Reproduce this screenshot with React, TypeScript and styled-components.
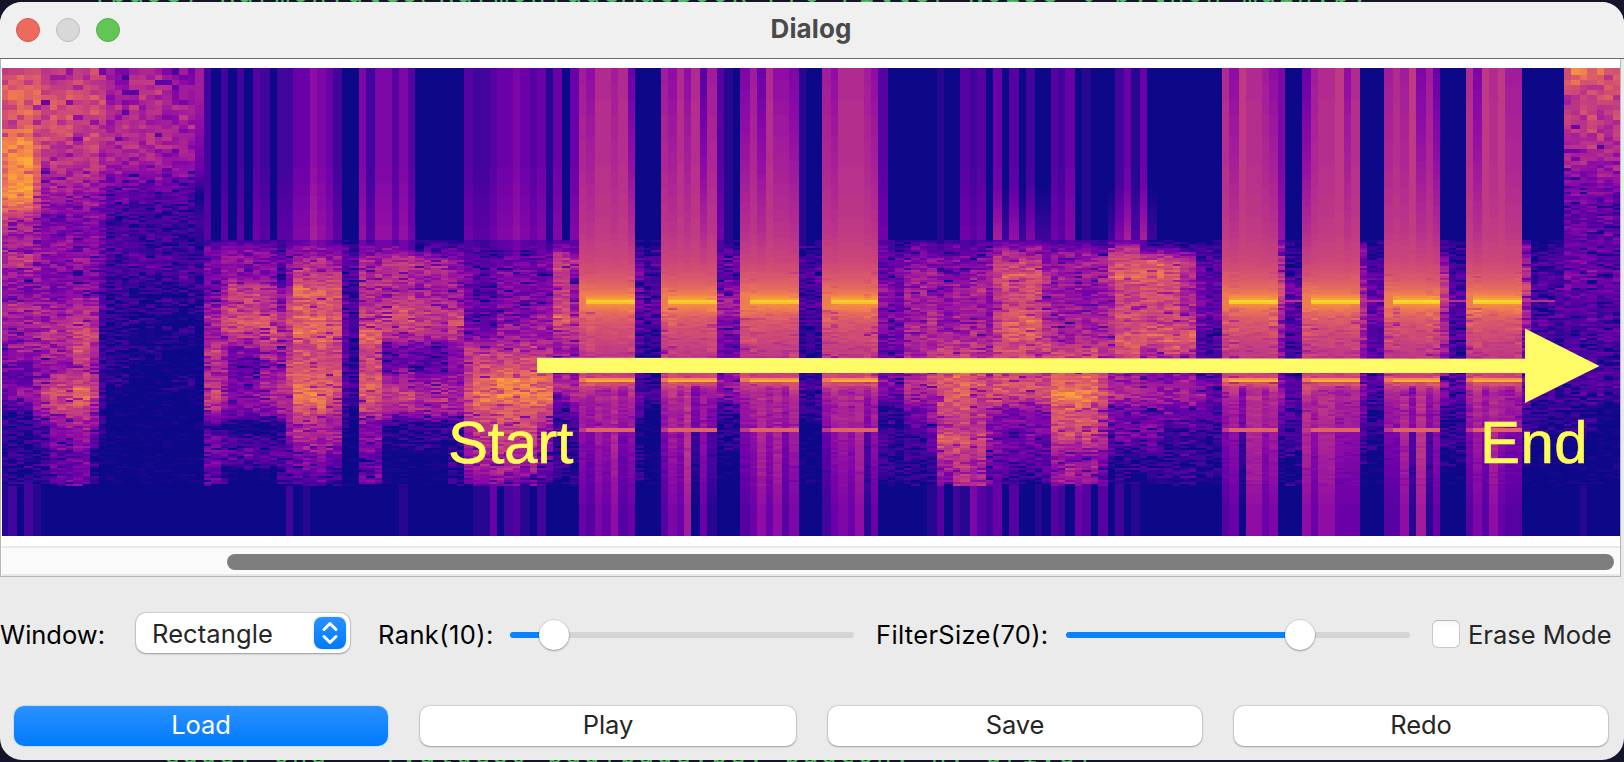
import React from "react";
import styled, { createGlobalStyle } from "styled-components";

const GlobalStyle = createGlobalStyle`
  * { box-sizing: border-box; }
  html, body { margin: 0; padding: 0; overflow: hidden; }
  body { background: #15152a; }
`;

/* ---------- spectrogram data ---------- */

// Each column: left edge, level at the top, level at the bottom (a = 0, each letter adds 0.05).
const COLUMNS =
  "2kb 8kc 17ka 24kc 33kb 41ia 50ia 57ia 66ia 73ia 83ia 90ia 99ia 106ia 115ia 122ia 129ia 139ia 146ia 155ia 162ia 172ia 179ia 188ia 195ha " +
  "204ca 211aa 221ca 228aa 237ca 244aa 253da 260ca 270aa 277ca 286cc 293ea 303eb 310ga 317fa 326ea 333ca 342aa 349aa 359fa 366ca 375fa 382fa 392da 399fb 408da " +
  "415aa 424aa 431aa 441aa 448aa 457aa 464da 473cb 480cb 490de 497ea 504ec 513fd 520eb 530da 537ec 546ba 553ea 562aa 570ea " +
  "579he 586gd 595if 602ie 611hg 618id 628ee 635aa 644aa 651aa 661hd 668gf 677ie 684gh 691ia 700de 707hb 717da 724ba 733aa " +
  "740fd 750he 757eg 766ie 773gg 782gd 789ff 799ba 806aa 815aa 822hc 831ge 838if 848ie 855ig 864hb 871ge 878da " +
  "888aa 895aa 904aa 911aa 920aa 927ab 937bd 944aa 953ac 960db 970cf 977dd 986ac 993ee 1002aa 1009dd 1019aa 1026ca 1035ab 1042aa " +
  "1051dd 1058cc 1065ea 1075ae 1082bd 1091aa 1098ad 1108aa 1115cc 1124ea 1131bb 1140ea 1147aa 1157aa 1164aa 1173aa 1180aa 1189aa 1196aa 1206aa 1213aa " +
  "1222id 1229ge 1239ja 1246ig 1253ig 1262he 1269gf 1278fa 1285aa 1295aa 1302eg 1311he 1318ig 1328ig 1335je 1344ge 1351ie 1360aa 1367aa 1377aa " +
  "1384hd 1393id 1400hg 1409jb 1416fh 1426hb 1433ee 1440aa 1449aa 1456aa 1466id 1473ff 1482jd 1489ig 1498je 1505hd 1515hd 1522aa 1531aa 1538aa 1548aa 1555aa " +
  "1564na 1571na 1580nb 1587na 1597ma 1604ma 1613ma";

// Level profiles of the voiced region, sampled every 15px from y = 245.
// Regions with an upper profile are noisy over the full height.
const REGIONS: [number, string, string?][] = [
  [2, "higfihhfeeecccbbb", "kmlonoj"],
  [8, "hkgfihghedhbbbbbb", "knmpppi"],
  [33, "gigfiiihfhhgccbbb", "kmklmlh"],
  [41, "ggffhhihgikhddccc", "ijkjihf"],
  [50, "ggffhijigjljgfede", "ikljjhf"],
  [73, "ghfgijkkilmjhgefe", "jkkjihf"],
  [90, "ggfghhjigikhfebbc", "jkkjihf"],
  [99, "eeddecbccbcbbaaaa", "ijjihfe"],
  [106, "dccccbbbbbaaaaaaa", "ghiigec"],
  [129, "cdcbbbabaaaaaaaaa", "hiiigdc"],
  [162, "ccdbbabaabaaaaaaa", "ghhhgdc"],
  [195, "bccbbaaaaaaaaaaaa", "hhgfeac"],
  [204, "effegigjiikhbefde"],
  [221, "fgghikihhhifbdeae"],
  [228, "fggkjljfdfgfaceaa"],
  [260, "ffgjilkighifbceaa"],
  [277, "debfhiiggiihbcebc"],
  [286, "egfhkkiiklihhfdeb"],
  [293, "fijmlmmklmnlihged"],
  [326, "fhjllllkklljhiedb"],
  [342, "dddceededddbbaaaa"],
  [349, "bddbcccbbccaaaaaa"],
  [359, "ehiiikmkklljfgeef"],
  [382, "ejiikkieehkhbbaaa"],
  [415, "cihhjjiddgihbbaaa"],
  [448, "cfhhikiffgigbbbbb"],
  [464, "cdgfeegkjkljhhgfe"],
  [473, "cdecedfjkmnliihhe"],
  [497, "cefffghjloolkjihf"],
  [537, "dfefghgjkmnkhgfec"],
  [553, "fjjjkmihfigdcbcbb"],
  [570, "digghjigfgiecbbab"],
  [635, "befeeddcdddcbabba"],
  [644, "bdcdddbbbbcaaaaaa"],
  [717, "bfdgiffefggcbbaaa"],
  [799, "bcdcdccbaccbaaaaa"],
  [878, "deegffeeegebccbbb"],
  [895, "cefefffedgdbacaba"],
  [904, "efhhhhihhiiedbcbb"],
  [927, "eghghihjikhgfecbb"],
  [937, "dfgfgghklllkimigf"],
  [953, "dfghhhhjlmmkjljij"],
  [970, "dfhihhijjlkjilihi"],
  [986, "efigfghiiikhfhfee"],
  [993, "fjkjijkkkklhfffee"],
  [1002, "gjlkkmlkjlkffeedb"],
  [1042, "gfkhiijkkklgeedeb"],
  [1051, "ehhgghhkkmolljghg"],
  [1098, "dhiggihkikljhigdd"],
  [1108, "hjkihjhjfhigedcac"],
  [1115, "ikmjkkllhhiefebbb"],
  [1140, "clmlkkliegiefebbb"],
  [1164, "cklkkklleghfdcbcb"],
  [1180, "bjihijmjehiedcccb"],
  [1196, "bdfefedddfhecbcba"],
  [1206, "ccddeddcdeddcbbba"],
  [1278, "hijkjhgfffgedcbba"],
  [1285, "bbcedddcccdcccbab"],
  [1360, "ffghiihggffedcbaa"],
  [1367, "bcddeeddddcbbbaaa"],
  [1440, "dgikihiggggcbcbaa"],
  [1449, "bccddcdccddcbbbaa"],
  [1522, "fhikhhgfffedccbaa"],
  [1531, "bccdcdcccccbbaaaa"],
  [1564, "eefedddccdcbbaaaa", "niiihfe"],
  [1571, "eefedddccdcbbaaaa", "njjigfe"],
  [1597, "edeeccdccdcaaaaaa", "mkjihee"],
];

// Tone bursts: first column, start of the bright line, end.
const TONES: [number, number, number][] = [
  [579, 586, 635],
  [661, 668, 717],
  [740, 750, 799],
  [822, 831, 878],
  [1222, 1229, 1278],
  [1302, 1311, 1360],
  [1384, 1393, 1440],
  [1466, 1473, 1522],
];

const TONE_PROFILE: [number, number][] = [
  [68, 0.4], [170, 0.42], [230, 0.45], [260, 0.5], [280, 0.57], [292, 0.66], [297, 0.75], [299, 0.8],
  [305, 0.71], [312, 0.62], [322, 0.55], [338, 0.5], [356, 0.44], [372, 0.48], [384, 0.52], [390, 0.44], [400, 0.36], [428, 0.34],
];

const PLASMA = [
  [13, 8, 135], [65, 4, 157], [106, 0, 168], [143, 13, 164], [177, 42, 144], [204, 71, 120],
  [225, 100, 98], [242, 132, 75], [252, 166, 54], [252, 206, 37], [240, 249, 33],
];

const LEFT = 2;
const TOP = 68;
const RIGHT = 1620;
const BOTTOM = 536;
const SHADES = 80;

const level = (letter: string) => (letter.charCodeAt(0) - 97) * 0.05;
const clamp = (n: number, lo = 0, hi = 1) => Math.max(lo, Math.min(hi, n));

function shade(v: number) {
  const p = clamp(v) * 10;
  const i = Math.min(9, Math.floor(p));
  const c = PLASMA[i].map((a, k) => Math.round(a + (PLASMA[i + 1][k] - a) * (p - i)));
  return `rgb(${c.join(",")})`;
}

function sample(profile: string, pos: number) {
  const p = clamp(pos, 0, profile.length - 1);
  const i = Math.min(profile.length - 2, Math.floor(p));
  const a = level(profile[i]);
  return a + (level(profile[i + 1]) - a) * (p - i);
}

function toneAt(y: number) {
  for (let i = 1; i < TONE_PROFILE.length; i++) {
    const [y1, v1] = TONE_PROFILE[i];
    const [y0, v0] = TONE_PROFILE[i - 1];
    if (y <= y1) return v0 + ((v1 - v0) * (y - y0)) / (y1 - y0);
  }
  return 0.34;
}

function makeRandom(seed: number) {
  let s = seed;
  return () => {
    s = (s * 1664525 + 1013904223) >>> 0;
    return s / 4294967296;
  };
}

function buildSpectrogram() {
  const random = makeRandom(4711);
  const paths: string[] = Array(SHADES + 1).fill("");
  const cols = COLUMNS.split(" ").map((c) => ({
    x: parseInt(c, 10),
    top: level(c[c.length - 2]),
    bottom: level(c[c.length - 1]),
  }));
  // Frequency bins grow taller towards the top edge.
  const rows = [TOP];
  while (rows[rows.length - 1] < BOTTOM) {
    const y = rows[rows.length - 1];
    rows.push(Math.min(BOTTOM, y + (y < 75 ? 7 : y < 125 ? 5 : y < 165 ? 4 : y < 185 ? 3 : 2)));
  }

  cols.forEach((col, ci) => {
    const x = col.x;
    const width = (ci + 1 < cols.length ? cols[ci + 1].x : RIGHT) - x;
    const tone = TONES.find((t) => x >= t[0] && x < t[2]);
    let region = REGIONS[0];
    for (const r of REGIONS) if (r[0] <= x) region = r;
    const upper = region[2];
    const floorY = 484 + Math.floor(random() * 2) * 2;
    let start = TOP;
    let current = -1;
    const flush = (to: number) => {
      if (current >= 0) paths[current] += `M${x} ${start}h${width}V${to}h${-width}z`;
      start = to;
    };
    for (let r = 0; r < rows.length - 1; r++) {
      const y = rows[r];
      const dip = random() < 0.07 ? -0.17 : 0;
      const noise = (random() + random() - 1) * 0.12 + dip;
      let v: number;
      if (tone) {
        const edge = x < tone[1];
        const mid = Math.min(x - tone[0], tone[2] - x) > 14;
        if (y < 428) {
          v = toneAt(y) + (col.top - 0.4) * clamp(1 - (y - 68) / 210);
          if (y > 384) v += (col.bottom - 0.2) * 0.5 + noise * 0.4;
          else if (y > 306) v += noise * (mid ? 0.25 : 0.75);
          else if (y > 270 && !mid) v += noise * 0.25;
          if (mid && y > 384 && y < 396) v -= 0.08;
          if (edge) v = Math.min(v, 0.67);
        } else {
          v = col.bottom + 0.1 * clamp(1 - (y - 428) / 80);
          if (y < floorY) v += noise * 0.25;
        }
        if (!edge && y >= 300 && y < 302) v = x < 1000 ? 0.91 : 0.95;
        if (!edge && y >= 302 && y < 304) v = x < 1000 ? 0.86 : 0.89;
        if (y >= 378 && y < 382) v = edge ? 0.66 : y >= 380 ? 0.83 : 0.72;
        if (y >= 428 && y < 431) v = edge ? 0.45 : 0.6;
      } else if (upper && y < 245) {
        v = y < 220
          ? sample(upper, (y - 70) / 25)
          : level(upper[6]) + ((level(region[1][0]) - level(upper[6])) * (y - 220)) / 25;
        if (x !== 195) v += noise;
      } else if (y < 240) {
        v = col.top + (col.top > 0.08 ? 0.07 * clamp((y - 160) / 80) : 0);
        if ((x > 990 && x < 1045) || (x > 1105 && x < 1148)) v += 0.1 * clamp((y - 185) / 55);
      } else if (y < floorY) {
        v = sample(region[1], (y - 245) / 15);
        v += noise * (v < 0.02 ? 0.35 : 1.1);
        if (!upper && y < 250) v = Math.max(v * clamp((y - 234) / 12), col.top * 0.9);
        if (x >= 1278 && y >= 300 && y < 302 && x < 1550) v = Math.max(v, 0.42);
      } else {
        v = col.bottom;
      }
      const index = Math.round(clamp(v) * SHADES);
      if (index !== current) {
        if (r > 0) flush(y);
        current = index;
      }
    }
    flush(BOTTOM);
  });
  return paths;
}

const SPECTROGRAM = buildSpectrogram();

/* ---------- window ---------- */

const Desktop = styled.div`
  width: 1624px;
  height: 762px;
  position: relative;
  overflow: hidden;
  background: #15152a;
  font-family: Inter, "Liberation Sans", sans-serif;
`;

const TerminalLine = styled.div<{ $x: number; $y: number }>`
  position: absolute;
  left: ${(p) => p.$x}px;
  top: ${(p) => p.$y}px;
  font: 26px/28px "DejaVu Sans Mono", monospace;
  letter-spacing: 2.6px;
  white-space: pre;
  color: #4bbb62;
`;

const Window = styled.main`
  position: relative;
  width: 1624px;
  height: 758px;
  margin-top: 2px;
  border-radius: 22px;
  overflow: hidden;
  background: #ebebeb;
  display: flex;
  flex-direction: column;
`;

const TitleBar = styled.header`
  height: 57px;
  flex: none;
  display: grid;
  grid-template-columns: 1fr auto 1fr;
  align-items: center;
  padding: 0 16px 3px;
  background: #f0f0f0;
  border-bottom: 1px solid #696969;
`;

const Lights = styled.div`
  display: flex;
  gap: 16px;
  padding-top: 2px;
`;

const Light = styled.span<{ $fill: string; $rim: string }>`
  width: 24px;
  height: 24px;
  border-radius: 50%;
  background: ${(p) => p.$fill};
  border: 1px solid ${(p) => p.$rim};
`;

const Title = styled.h1`
  margin: 0;
  padding-right: 2px;
  font-size: 26px;
  line-height: 32px;
  font-weight: 700;
  letter-spacing: 0.1px;
  color: #4a4a4a;
`;

const Viewport = styled.section`
  width: 1621px;
  height: 518px;
  flex: none;
  padding-top: 9px;
  background: #fff;
  border: solid #b6b6b6;
  border-width: 0 1px 1px;
  display: flex;
  flex-direction: column;
`;

const Plot = styled.svg`
  display: block;
  width: 1618px;
  height: 468px;
  margin-left: 1px;
  flex: none;
`;

const ScrollTrack = styled.div`
  height: 30px;
  margin: 10px 0 0 1px;
  padding: 6px 6px 0 225px;
  background: #fafafa;
  border: solid #e8e8e8;
  border-width: 2px 0;
`;

const ScrollThumb = styled.div`
  height: 16px;
  width: 1387px;
  border-radius: 8px;
  background: #7d7d7d;
`;

const Controls = styled.div`
  display: flex;
  align-items: center;
  height: 40px;
  margin-top: 36px;
  flex: none;
`;

const Label = styled.label<{ $width: number; $spacing?: number }>`
  width: ${(p) => p.$width}px;
  flex: none;
  padding-top: 4px;
  font-size: 25.5px;
  line-height: 32px;
  letter-spacing: ${(p) => p.$spacing ?? 0}px;
  white-space: nowrap;
  color: #000;
`;

const Select = styled.div`
  width: 214px;
  height: 40px;
  margin-right: 28px;
  padding: 0 4px 0 16px;
  flex: none;
  display: flex;
  align-items: center;
  justify-content: space-between;
  border-radius: 10px;
  background: #fff;
  box-shadow: 0 0 1px 1px rgba(0, 0, 0, 0.12), 0 1px 2px rgba(0, 0, 0, 0.25);
  font-size: 25.5px;
  letter-spacing: 0.1px;
  color: #262626;
`;

const Stepper = styled.span`
  width: 32px;
  height: 32px;
  border-radius: 8px;
  background: linear-gradient(#2a91ff, #007aff);
  box-shadow: 0 0 2px rgba(0, 122, 255, 0.4);
`;

const SliderTrack = styled.div<{ $gap: number }>`
  width: 344px;
  height: 6px;
  flex: none;
  display: flex;
  align-items: center;
  margin: 3px ${(p) => p.$gap}px 0 0;
  border-radius: 3px;
  background: #d4d4d4;
`;

const SliderFill = styled.div<{ $width: number }>`
  width: ${(p) => p.$width}px;
  height: 6px;
  border-radius: 3px 0 0 3px;
  background: #0a82ff;
`;

const Knob = styled.div`
  width: 30px;
  height: 30px;
  flex: none;
  margin-left: -15px;
  border-radius: 50%;
  background: #fff;
  box-shadow: 0 0 1px 0.5px rgba(0, 0, 0, 0.16), 0 1px 2px rgba(0, 0, 0, 0.28);
`;

const CheckBox = styled.span`
  width: 28px;
  height: 28px;
  flex: none;
  margin: 2px 8px 0 0;
  border-radius: 6px;
  border: 1px solid #c9c9c9;
  border-top-color: #b8b8b8;
  background: linear-gradient(#f6f6f6, #fff 25%);
`;

const CheckLabel = styled(Label)`
  color: #262626;
`;

const Actions = styled.div`
  display: grid;
  grid-template-columns: 374px 376px 374px 374px;
  column-gap: 32px;
  margin: 53px 0 0 14px;
`;

const Button = styled.button<{ $primary?: boolean }>`
  height: 40px;
  padding: 0 0 2px;
  border: 0;
  border-radius: 10px;
  font: 25.5px/32px Inter, "Liberation Sans", sans-serif;
  letter-spacing: -0.1px;
  color: ${(p) => (p.$primary ? "#fff" : "#262626")};
  background: ${(p) => (p.$primary ? "linear-gradient(#2a91ff, #007aff)" : "#fff")};
  box-shadow: ${(p) =>
    p.$primary
      ? "0 0 2px rgba(0, 122, 255, 0.4)"
      : "0 0 1px 1px rgba(0, 0, 0, 0.1), 0 1px 2px rgba(0, 0, 0, 0.25)"};
`;

function Slider({ value, gap }: { value: number; gap: number }) {
  return (
    <SliderTrack $gap={gap}>
      <SliderFill $width={value} />
      <Knob />
    </SliderTrack>
  );
}

function Spectrogram() {
  return (
    <Plot viewBox={`${LEFT} ${TOP} ${RIGHT - LEFT} ${BOTTOM - TOP}`}>
      <rect x={LEFT} y={TOP} width={RIGHT - LEFT} height={BOTTOM - TOP} fill="#0d0887" />
      <g shapeRendering="crispEdges">
        {SPECTROGRAM.map((d, i) => (d ? <path key={i} d={d} fill={shade(i / SHADES)} /> : null))}
      </g>
      <path d="M537 357.7L1525 358.8V328.5L1599.5 366L1525 403V373H537z" fill="#fffb66" />
      <g
        fill="#fffc55"
        stroke="#fffc55"
        strokeWidth="0.6"
        fontFamily='"Liberation Sans", Arial, sans-serif'
        fontSize="60"
      >
        <text x="448" y="463" letterSpacing="-0.3">Start</text>
        <text x="1480" y="463" letterSpacing="0.4">End</text>
      </g>
    </Plot>
  );
}

export default function App() {
  return (
    <Desktop>
      <GlobalStyle />
      <TerminalLine $x={92} $y={-21}>(base) HarmonYates@HarmonYadeMacBook-Pro Filter-Noise % python main.py</TerminalLine>
      <TerminalLine $x={164} $y={740}>edge, one = (value80 pad(pade.pe, padcon, n, drive)</TerminalLine>
      <Window>
        <TitleBar>
          <Lights>
            <Light $fill="#ed6a5e" $rim="#d9564b" />
            <Light $fill="#d8d8d8" $rim="#bcbcbc" />
            <Light $fill="#62c655" $rim="#51ae45" />
          </Lights>
          <Title>Dialog</Title>
        </TitleBar>
        <Viewport>
          <Spectrogram />
          <ScrollTrack>
            <ScrollThumb />
          </ScrollTrack>
        </Viewport>
        <Controls>
          <Label $width={136}>Window:</Label>
          <Select>
            Rectangle
            <Stepper>
              <svg width="32" height="32" viewBox="0 0 32 32" fill="none" stroke="#fff" strokeWidth="3" strokeLinecap="round" strokeLinejoin="round">
                <path d="M10 12.5L16 6.5L22 12.5M10 19.5L16 25.5L22 19.5" />
              </svg>
            </Stepper>
          </Select>
          <Label $width={132} $spacing={0.4}>Rank(10):</Label>
          <Slider value={44} gap={22} />
          <Label $width={190} $spacing={0.33}>FilterSize(70):</Label>
          <Slider value={234} gap={22} />
          <CheckBox />
          <CheckLabel $width={150}>Erase Mode</CheckLabel>
        </Controls>
        <Actions>
          <Button $primary>Load</Button>
          <Button>Play</Button>
          <Button>Save</Button>
          <Button>Redo</Button>
        </Actions>
      </Window>
    </Desktop>
  );
}
